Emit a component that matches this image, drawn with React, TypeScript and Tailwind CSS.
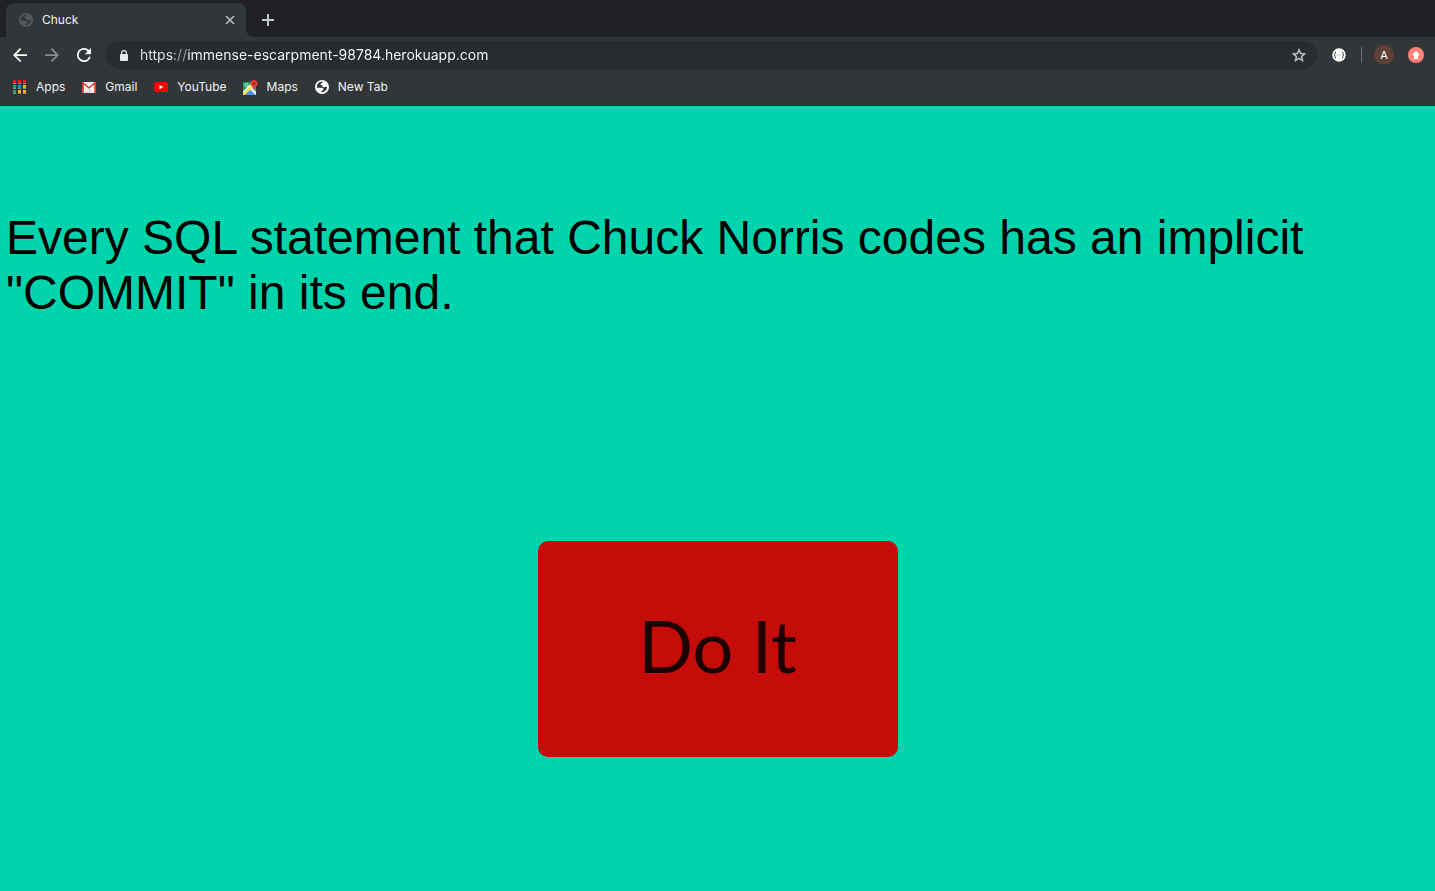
import type { ReactNode } from "react";

function GlobeIcon({ disc, land }: { disc: string; land: string }) {
  return (
    <svg viewBox="0 0 14 14" className="h-3.5 w-3.5 shrink-0" aria-hidden="true">
      <circle cx="7" cy="7" r="7" className={disc} />
      <path
        className={land}
        d="M7.9 1.6C7.3 2 7.2 2.5 7.4 3.1 6.8 3.3 5.8 3.2 5.6 3.9 5.4 4.7 6 5.3 6.8 5.2c.5 0 .7.5.8 1 .2.9 1 1.2 1.9 1.1.9-.2 1.300-.7 2.600-.5C12.200 9.500 10 12 7.200 12.200l-1-.1c.1-.8 0-1.100.7-1.300.9-.2 1.500-.6 1.500-1.500 0-1-.9-1.500-1.900-1.500H1.900C1.600 4.300 4 1.500 7.900 1.600Z"
      />
    </svg>
  );
}

function AppsIcon() {
  const colors = [
    "#ff1010", "#ff1010", "#ff1010",
    "#22a565", "#1a86f0", "#ffb000",
    "#22a565", "#ffb000", "#ffb000",
  ];
  return (
    <svg viewBox="0 0 14 14" className="h-3.5 w-3.5 shrink-0" aria-hidden="true">
      {colors.map((color, i) => {
        const x = (i % 3) * 5;
        const y = Math.floor(i / 3) * 5;
        return (
          <g key={i}>
            <rect x={x} y={y} width="3" height="3" fill={color} />
            <rect x={x} y={y + 3} width="3" height="1" fill="#c8c8c8" fillOpacity="0.6" />
          </g>
        );
      })}
    </svg>
  );
}

function GmailIcon() {
  return (
    <svg viewBox="0 0 14 11" className="h-[11px] w-3.5 shrink-0" aria-hidden="true">
      <rect width="14" height="11" rx="1" fill="#f1efee" />
      <path d="M2 11 7 6.500l5 4.500Z" fill="#dedcdb" />
      <path d="M0 1a1 1 0 0 1 1.500-.8L7 4.900 12.500.2A1 1 0 0 1 14 1v9a1 1 0 0 1-1 1h-.8V2.500L7 6.800 1.800 2.500V11H1a1 1 0 0 1-1-1Z" fill="#e0382c" />
    </svg>
  );
}

function YouTubeIcon() {
  return (
    <svg viewBox="0 0 14 10" className="h-2.5 w-3.5 shrink-0" aria-hidden="true">
      <rect width="14" height="10" rx="2" fill="#ff0000" />
      <path d="M5.500 3v4.200L9.200 5.100Z" fill="#ffffff" />
    </svg>
  );
}

function MapsIcon() {
  return (
    <svg viewBox="0 0 15 15" className="h-[15px] w-[15px] shrink-0" aria-hidden="true">
      <rect y="2" width="13" height="13" rx="1" fill="#1ea362" />
      <path d="M1.500 15 7 9.500l5.500 5.500Z" fill="#4a8af4" />
      <path d="M7 9.500 9 7.500l4 4V15h-.5Z" fill="#e8eaed" />
      <path d="M0 12.500 9 3.500l2 3L1.800 15H1a1 1 0 0 1-1-1Z" fill="#ffe04a" />
      <path d="M8.500 3 0 11.500V13L9.800 4Z" fill="#f4f4f4" />
      <circle cx="3.500" cy="5.200" r="1.500" fill="none" stroke="#d9f2e4" strokeWidth="0.9" />
      <path d="M11 0a3.600 3.600 0 0 1 3.600 3.600c0 2.400-2.500 3.100-3.600 6.400-1.100-3.300-3.600-4-3.600-6.400A3.600 3.600 0 0 1 11 0Z" fill="#ea3a35" />
      <circle cx="11" cy="3.600" r="1.200" fill="#8c1b1b" />
    </svg>
  );
}

function Bookmark({ icon, label }: { icon: ReactNode; label: string }) {
  return (
    <a href="#" className="flex items-center gap-[9px]">
      <span className="flex w-3.5 justify-center">{icon}</span>
      <span>{label}</span>
    </a>
  );
}

function TabStrip() {
  return (
    <div className="flex h-[37px] items-end bg-[#202124] pl-1.5">
      <div className="flex h-[34px] w-60 items-center rounded-t-lg bg-[#323639] pr-[11px] pl-[13px]">
        <GlobeIcon disc="fill-[#54585b]" land="fill-[#323639]" />
        <span className="ml-[9px] flex-1 text-xs text-[#f1f3f4]">Chuck</span>
        <button type="button" aria-label="Close tab" className="text-[#bdc1c6]">
          <svg viewBox="0 0 10 10" className="h-2.5 w-2.5" fill="none" stroke="currentColor" strokeWidth="1.5">
            <path d="M1 1l8 8M9 1 1 9" />
          </svg>
        </button>
      </div>
      <svg viewBox="0 0 8 8" className="h-2 w-2 fill-[#323639]" aria-hidden="true">
        <path d="M0 0a8 8 0 0 0 8 8H0Z" />
      </svg>
      <button type="button" aria-label="New tab" className="ml-2 flex h-[34px] items-center text-[#c4c8cb]">
        <svg viewBox="0 0 12 12" className="h-3 w-3" fill="none" stroke="currentColor" strokeWidth="2">
          <path d="M6 0v12M0 6h12" />
        </svg>
      </button>
    </div>
  );
}

function Toolbar() {
  return (
    <div className="flex h-9 items-center bg-[#323639] pr-[11px] pl-[13px]">
      <button type="button" aria-label="Back" className="text-white">
        <svg viewBox="4 4 16 16" className="h-3.5 w-3.5" fill="currentColor">
          <path d="M20 11H7.830l5.590-5.590L12 4l-8 8 8 8 1.410-1.410L7.830 13H20v-2z" />
        </svg>
      </button>
      <button type="button" aria-label="Forward" className="ml-[18px] text-[#888b8d]">
        <svg viewBox="4 4 16 16" className="h-3.5 w-3.5" fill="currentColor">
          <path d="M12 4l-1.410 1.410L16.170 11H4v2h12.170l-5.580 5.590L12 20l8-8z" />
        </svg>
      </button>
      <button type="button" aria-label="Reload" className="ml-[18px] text-white">
        <svg viewBox="4 4 16 16" className="h-3.5 w-3.5" fill="currentColor">
          <path d="M17.650 6.350A7.960 7.960 0 0 0 12 4a8 8 0 1 0 7.730 10h-2.080A6 6 0 1 1 12 6c1.660 0 3.140.69 4.220 1.780L13 11h7V4l-2.350 2.350z" />
        </svg>
      </button>
      <div className="ml-[15px] flex h-7 min-w-0 flex-1 items-center rounded-full bg-[#282c2f] pr-[11px] pl-3.5">
        <svg viewBox="0 0 8 11" className="h-[11px] w-2 shrink-0 fill-[#e8eaed]" aria-hidden="true">
          <path d="M1 4V3a3 3 0 0 1 6 0v1a1 1 0 0 1 1 1v5a1 1 0 0 1-1 1H1a1 1 0 0 1-1-1V5a1 1 0 0 1 1-1Zm1.200 0h3.600V3a1.800 1.800 0 0 0-3.600 0Z" />
        </svg>
        <input
          type="text"
          aria-label="Address and search bar"
          defaultValue="https://immense-escarpment-98784.herokuapp.com"
          className="ml-3 min-w-0 flex-1 bg-[linear-gradient(to_right,#e8eaed_35px,#9aa0a6_35px,#9aa0a6_48px,#ffffff_48px)] bg-clip-text text-sm text-transparent outline-none"
        />
        <button type="button" aria-label="Bookmark this page" className="text-[#c4c8cb]">
          <svg viewBox="2 2 20 19" className="h-3.5 w-3.5" fill="currentColor" stroke="currentColor" strokeWidth="0.500">
            <path d="M22 9.240l-7.190-.62L12 2 9.190 8.630 2 9.240l5.460 4.730L5.820 21 12 17.270 18.180 21l-1.630-7.030L22 9.240zM12 15.400l-3.760 2.270 1-4.280-3.320-2.880 4.380-.38L12 6.100l1.710 4.040 4.380.38-3.320 2.880 1 4.280L12 15.400z" />
          </svg>
        </button>
      </div>
      <button type="button" aria-label="JSON formatter" className="ml-3.5">
        <svg viewBox="0 0 16 16" className="h-4 w-4" fill="none">
          <circle cx="8" cy="8" r="7.200" fill="#ffffff" stroke="#1d1f21" strokeWidth="0.8" />
          <path d="M5 5c-1.200 0-.8 1-1 1.900-.1.600-.4 1-1 1.100.6.100.9.500 1 1.100.2.900-.2 1.900 1 1.900M11 5c1.200 0 .8 1 1 1.900.1.600.4 1 1 1.100-.6.100-.9.500-1 1.100-.2.900.2 1.900-1 1.900" stroke="#333333" strokeWidth="1" />
          <path d="M6 8h1M7.500 8h1M9 8h1" stroke="#999999" strokeWidth="0.8" />
        </svg>
      </button>
      <span className="ml-3.5 h-4 w-px bg-[#6b6e70]" />
      <button
        type="button"
        aria-label="Account A"
        className="ml-3 flex h-5 w-5 items-center justify-center rounded-full bg-[#5d4037] text-[11px] text-white"
      >
        A
      </button>
      <button type="button" aria-label="Update available" className="ml-3.5">
        <svg viewBox="0 0 16 16" className="h-4 w-4">
          <circle cx="8" cy="8" r="8" fill="#ff8078" />
          <path d="M8 4 3.800 8.300H6V12h4V8.300h2.200Z" fill="#ffffff" />
        </svg>
      </button>
    </div>
  );
}

function BookmarksBar() {
  return (
    <nav
      aria-label="Bookmarks"
      className="flex h-[33px] items-center gap-[17px] border-b border-[#27292b] bg-[#323639] pb-1 pl-[13px] text-xs text-[#f1f3f4]"
    >
      <Bookmark icon={<AppsIcon />} label="Apps" />
      <Bookmark icon={<GmailIcon />} label="Gmail" />
      <Bookmark icon={<YouTubeIcon />} label="YouTube" />
      <Bookmark icon={<MapsIcon />} label="Maps" />
      <Bookmark icon={<GlobeIcon disc="fill-white" land="fill-[#323639]" />} label="New Tab" />
    </nav>
  );
}

export default function App() {
  return (
    <div className="flex min-h-screen flex-col bg-[#00d4ad]">
      <header className="font-[Inter,sans-serif]">
        <TabStrip />
        <Toolbar />
        <BookmarksBar />
      </header>
      <main className="flex flex-1 flex-col items-center px-1.5 pt-[104px] pb-8">
        <p className="w-full font-['Liberation_Sans',Arial,sans-serif] text-5xl leading-[55px] text-black">
          Every SQL statement that Chuck Norris codes has an implicit &quot;COMMIT&quot; in its end.
        </p>
        <button
          type="button"
          className="mt-[221px] h-54 w-90 rounded-[10px] bg-[#c50c08] pb-2 font-[Optima,Lato,sans-serif] text-7xl text-[#1e0000]"
        >
          Do It
        </button>
      </main>
    </div>
  );
}
